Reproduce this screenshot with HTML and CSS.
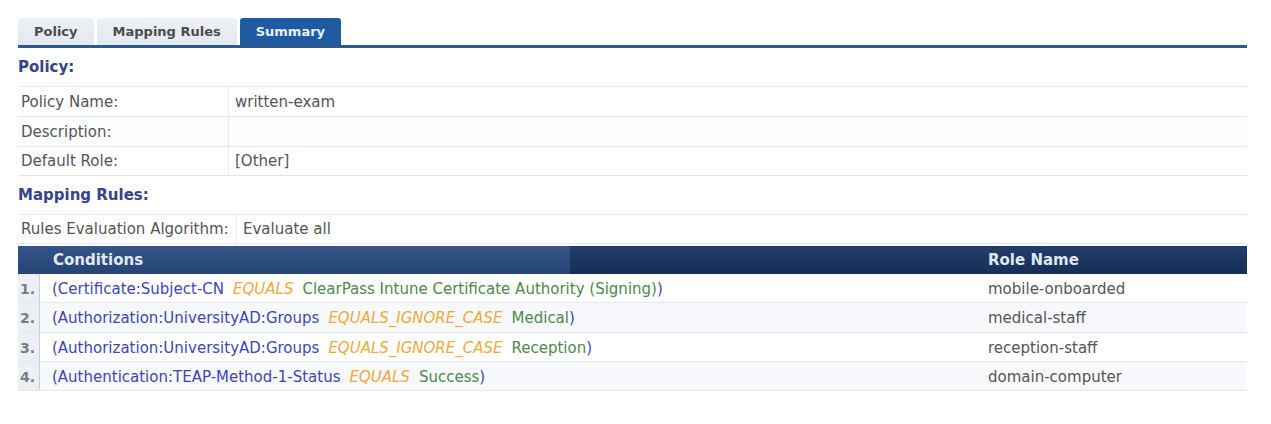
FILE: index.html
```html
<!DOCTYPE html>
<html>
<head>
<meta charset="utf-8">
<link rel="stylesheet" href="styles.css">
</head>
<body>
<div class="page">
  <div class="tabs">
    <div class="tab">Policy</div>
    <div class="tab">Mapping Rules</div>
    <div class="tab active">Summary</div>
  </div>

  <div class="heading">Policy:</div>
  <div class="kv">
    <div class="kv-row"><div class="kv-label">Policy Name:</div><div class="kv-value">written-exam</div></div>
    <div class="kv-row alt"><div class="kv-label">Description:</div><div class="kv-value"></div></div>
    <div class="kv-row"><div class="kv-label">Default Role:</div><div class="kv-value">[Other]</div></div>
  </div>

  <div class="heading">Mapping Rules:</div>
  <div class="kv kv-rules">
    <div class="kv-row"><div class="kv-label wide">Rules Evaluation Algorithm:</div><div class="kv-value">Evaluate all</div></div>
  </div>

  <div class="rules">
    <div class="rules-head">
      <div class="head-num"></div>
      <div class="head-cond">Conditions</div>
      <div class="head-role">Role Name</div>
    </div>
    <div class="rule">
      <div class="num">1.</div>
      <div class="cond">(Certificate:Subject-CN<span class="op">EQUALS</span><span class="val">ClearPass Intune Certificate Authority (Signing)</span>)</div>
      <div class="role">mobile-onboarded</div>
    </div>
    <div class="rule alt">
      <div class="num">2.</div>
      <div class="cond">(Authorization:UniversityAD:Groups<span class="op">EQUALS_IGNORE_CASE</span><span class="val">Medical</span>)</div>
      <div class="role">medical-staff</div>
    </div>
    <div class="rule">
      <div class="num">3.</div>
      <div class="cond">(Authorization:UniversityAD:Groups<span class="op">EQUALS_IGNORE_CASE</span><span class="val">Reception</span>)</div>
      <div class="role">reception-staff</div>
    </div>
    <div class="rule alt">
      <div class="num">4.</div>
      <div class="cond">(Authentication:TEAP-Method-1-Status<span class="op">EQUALS</span><span class="val">Success</span>)</div>
      <div class="role">domain-computer</div>
    </div>
  </div>
</div>
</body>
</html>
```

FILE: styles.css
```css
html, body {
  margin: 0;
  padding: 0;
  background: #ffffff;
}

.page {
  width: 1229px;
  padding: 18px 0 0 18px;
  font-family: "DejaVu Sans", Verdana, sans-serif;
  font-size: 15px;
  color: #555555;
}

.tabs {
  display: flex;
  gap: 3px;
  border-bottom: 3px solid #2c5a8d;
}

.tab {
  height: 27px;
  line-height: 28px;
  padding: 0 16px;
  font-size: 13px;
  font-weight: bold;
  color: #4c4c4c;
  background: linear-gradient(#eef2f6, #e2e8ef);
  border-radius: 3px 3px 0 0;
}

.tab.active {
  background: #1f5ba1;
  color: #eaf1fa;
}

.heading {
  height: 38px;
  display: flex;
  align-items: center;
  font-weight: bold;
  color: #36428c;
}

.kv-row {
  display: flex;
  height: 29px;
  border-top: 1px solid #e4e8ed;
  align-items: center;
}

.kv-row:last-child {
  border-bottom: 1px solid #e4e8ed;
  height: 28px;
}

.kv-row.alt {
  background: #fbfcfe;
}

.kv-label {
  width: 207px;
  height: 100%;
  display: flex;
  align-items: center;
  padding-left: 3px;
  border-right: 1px solid #e8ebef;
}

.kv-label.wide {
  width: 215px;
}

.kv-value {
  padding-left: 6px;
}

.kv-rules {
  margin-bottom: 2px;
}

.rules-head,
.rule {
  display: grid;
  grid-template-columns: 22px 1fr 259px;
  align-items: center;
}

.rules-head {
  height: 28px;
  font-weight: bold;
  color: #e2e9f3;
  background:
    linear-gradient(rgba(255,255,255,0.06), rgba(0,0,0,0.08)),
    linear-gradient(to right, #274a7f 0, #274a7f 552px, #15325f 552px, #15325f 100%);
}

.head-cond {
  padding-left: 13px;
}

.head-role {
  color: #dfe7f1;
}

.rule {
  height: 28.25px;
  border-bottom: 1px solid #e4e8ed;
}

.rule.alt {
  background: #f7f9fc;
}

.num {
  height: 100%;
  display: flex;
  align-items: center;
  padding-left: 2px;
  padding-top: 2px;
  box-sizing: border-box;
  background: #eceff3;
  border-right: 1px solid #c9ced5;
  font-weight: bold;
  font-size: 14px;
  color: #777c83;
}

.cond {
  padding-left: 12px;
  padding-top: 2px;
  color: #3d46b4;
  white-space: nowrap;
}

.op {
  margin: 0 9px;
  font-style: italic;
  color: #f1a93e;
}

.val {
  color: #4b8a4a;
}

.role {
  padding-top: 2px;
  color: #555555;
}
```
